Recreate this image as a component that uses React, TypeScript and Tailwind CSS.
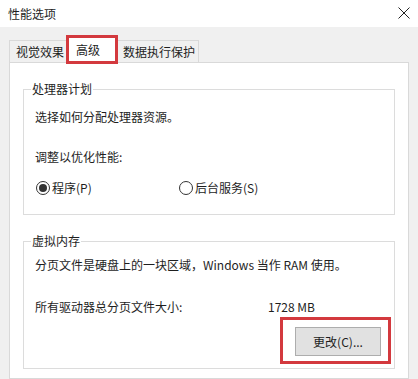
import React from "react";

const font = { fontFamily: '"Noto Sans CJK SC", "Noto Sans", sans-serif' };

function Radio({ checked, label }: { checked?: boolean; label: string }) {
  return (
    <label className="flex items-center gap-[2px]">
      <span className="flex h-[14px] w-[14px] items-center justify-center rounded-full border border-[#333] bg-white">
        {checked && <span className="h-[8px] w-[8px] rounded-full bg-[#333]" />}
      </span>
      <span>{label}</span>
    </label>
  );
}

export default function App() {
  return (
    <div
      className="flex h-[379px] w-[418px] flex-col overflow-hidden bg-[#f0f0f0] text-[12px] leading-[16px] text-[#1e1e1e]"
      style={font}
    >
      {/* title bar */}
      <div className="flex h-[27px] items-center justify-between bg-white pl-[8px] pr-[8px]">
        <span>性能选项</span>
        <svg width="12" height="12" viewBox="0 0 12 12" className="mb-[2px]">
          <path d="M0.5 0.5 L11.5 11.5 M11.5 0.5 L0.5 11.5" stroke="#222" strokeWidth="1" />
        </svg>
      </div>

      <div className="flex flex-1 flex-col px-[9px]">
        {/* tabs */}
        <div className="mt-[10px] flex items-end">
          <div className="flex h-[22px] w-[57px] items-center border-l border-t border-[#d9d9d9] pl-[6px]">
            视觉效果
          </div>
          <div className="relative z-10 -mb-px flex h-[26px] w-[52px] items-start bg-white pl-[9px] pt-[4px] border-x border-t border-[#d9d9d9]">
            高级
            <div className="pointer-events-none absolute -top-[3px] -left-[1px] h-[29px] w-[52px] border-[3px] border-[#d3393e]" />
          </div>
          <div className="flex h-[22px] w-[81px] items-center border-r border-t border-[#d9d9d9] pl-[5px]">
            数据执行保护
          </div>
        </div>

        {/* panel */}
        <div className="flex-1 border border-[#d9d9d9] bg-white px-[13px] pt-[18px]">
          <fieldset className="border border-[#dcdcdc] px-[11px] pb-[18px]">
            <legend className="ml-[-4px] px-px">处理器计划</legend>
            <p className="mt-[12px]">选择如何分配处理器资源。</p>
            <p className="mt-[24px]">调整以优化性能:</p>
            <div className="mt-[15px] flex pl-[1px]">
              <div className="w-[143px]">
                <Radio checked label="程序(P)" />
              </div>
              <Radio label="后台服务(S)" />
            </div>
          </fieldset>

          <fieldset className="mt-[18px] border border-[#dcdcdc] px-[11px] pb-[12px]">
            <legend className="ml-[-4px] px-px">虚拟内存</legend>
            <p className="mt-[8px]">分页文件是硬盘上的一块区域，Windows 当作 RAM 使用。</p>
            <div className="mt-[26px] flex">
              <span className="w-[233px]">所有驱动器总分页文件大小:</span>
              <span>1728 MB</span>
            </div>
            <div className="mt-[12px] flex justify-end pr-[2px]">
              <div className="relative">
                <button className="flex h-[29px] w-[86px] items-center justify-center border border-[#adadad] bg-[#e1e1e1]">
                  更改(C)...
                </button>
                <div className="pointer-events-none absolute -top-[10px] -left-[15px] h-[47px] w-[111px] border-[3px] border-[#d3393e]" />
              </div>
            </div>
          </fieldset>
        </div>
      </div>
    </div>
  );
}
